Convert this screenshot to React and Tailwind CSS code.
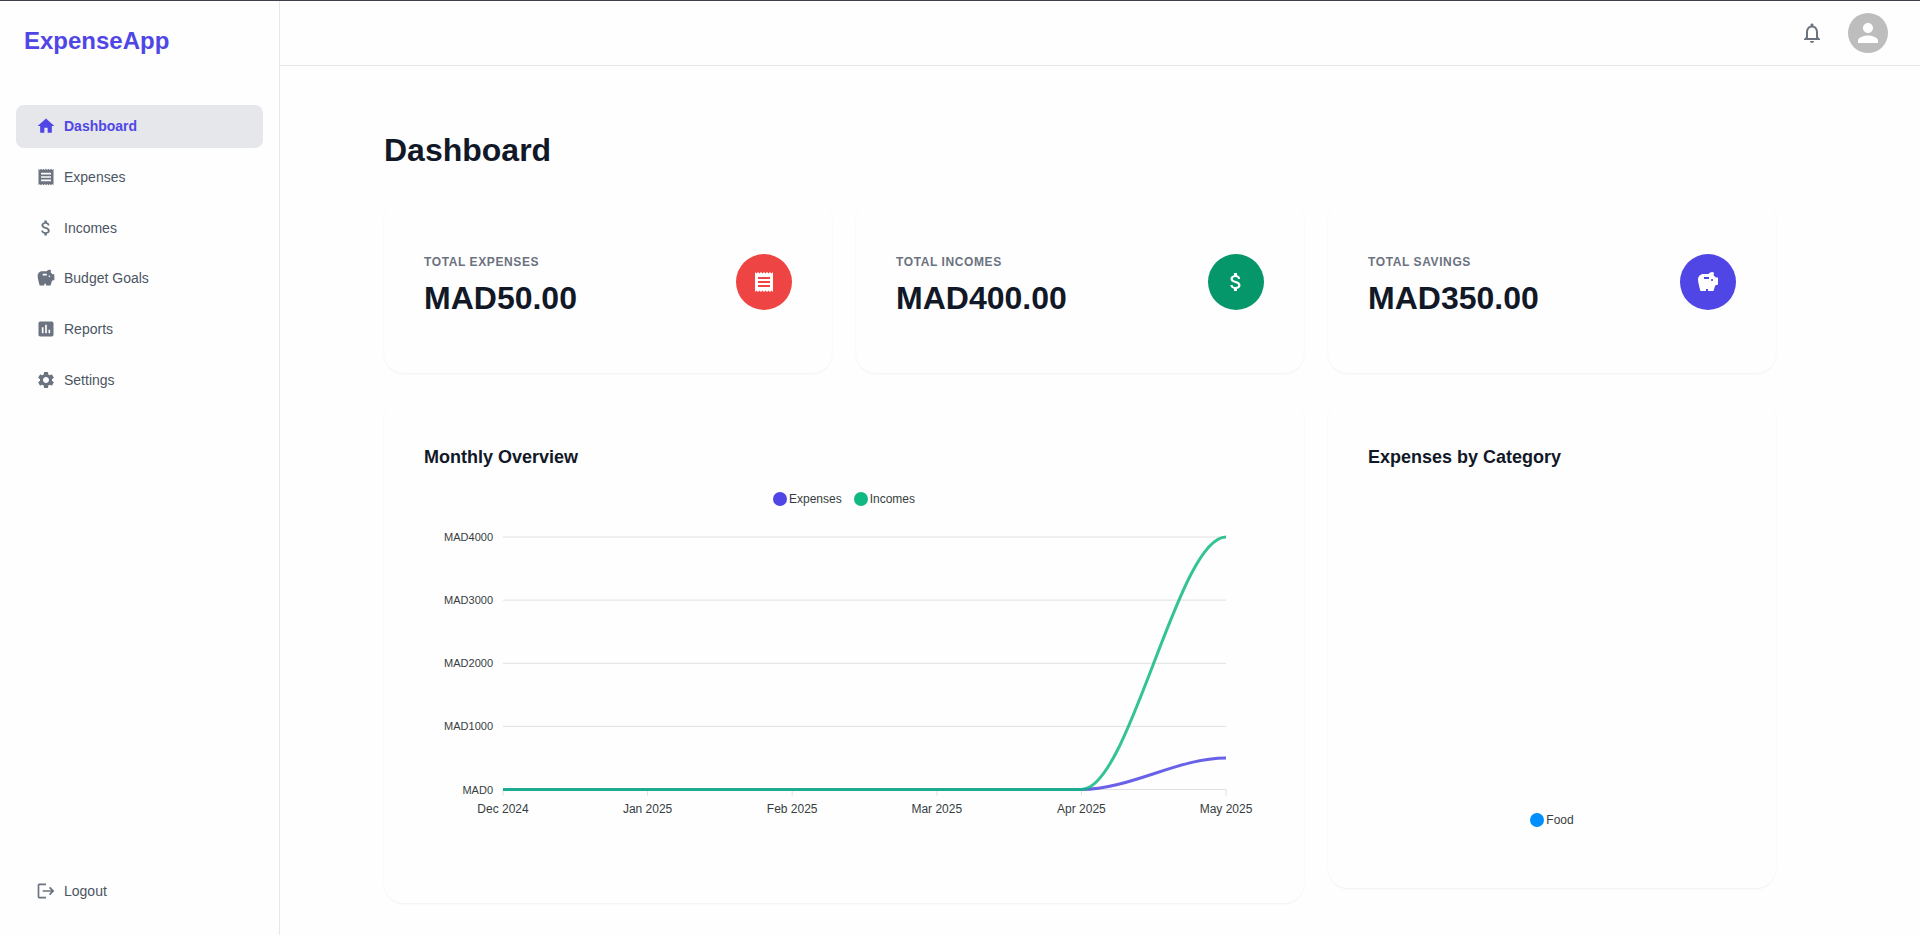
import {
  MdAssessment,
  MdAttachMoney,
  MdHome,
  MdLogout,
  MdNotificationsNone,
  MdPerson,
  MdReceipt,
  MdSavings,
  MdSettings,
} from "react-icons/md";

const navItems = [
  { label: "Dashboard", Icon: MdHome, active: true },
  { label: "Expenses", Icon: MdReceipt },
  { label: "Incomes", Icon: MdAttachMoney },
  { label: "Budget Goals", Icon: MdSavings },
  { label: "Reports", Icon: MdAssessment },
  { label: "Settings", Icon: MdSettings },
];

const stats = [
  { label: "TOTAL EXPENSES", value: "MAD50.00", Icon: MdReceipt, color: "bg-[#ef4444]" },
  { label: "TOTAL INCOMES", value: "MAD400.00", Icon: MdAttachMoney, color: "bg-[#059669]" },
  { label: "TOTAL SAVINGS", value: "MAD350.00", Icon: MdSavings, color: "bg-[#4f46e5]" },
];

const months = ["Dec 2024", "Jan 2025", "Feb 2025", "Mar 2025", "Apr 2025", "May 2025"];
const ticks = [4000, 3000, 2000, 1000, 0];

const PLOT = { left: 79, right: 802, top: 20, bottom: 272.5 };
const xAt = (i) => PLOT.left + ((PLOT.right - PLOT.left) * i) / (months.length - 1);
const yAt = (v) => PLOT.bottom - ((PLOT.bottom - PLOT.top) * v) / 4000;

// The series stay flat until April, then ease into the last value.
function linePath(last) {
  const x0 = xAt(4);
  const x1 = xAt(5);
  const third = (x1 - x0) / 3;
  return `M${xAt(0)} ${yAt(0)}H${x0}C${x0 + third} ${yAt(0)} ${x1 - third} ${yAt(last)} ${x1} ${yAt(last)}`;
}

function Sidebar() {
  return (
    <aside className="flex w-[280px] shrink-0 flex-col border-r border-[#e5e7eb]">
      <div className="px-6 pt-5 text-2xl leading-10 font-bold text-[#4f46e5]">ExpenseApp</div>
      <nav className="mt-11 grid h-[296px] grid-rows-6 gap-2 px-4">
        {navItems.map(({ label, Icon, active }) => (
          <a
            key={label}
            href="#"
            className={
              active
                ? "flex items-center gap-2 rounded-lg bg-[#e5e7eb] px-5 text-sm font-bold text-[#4f46e5]"
                : "flex items-center gap-2 rounded-lg px-5 text-sm text-[#4b5563]"
            }
          >
            <Icon className={active ? "size-5" : "size-5 text-[#6b7280]"} />
            {label}
          </a>
        ))}
      </nav>
      <div className="mt-auto px-4 pb-6">
        <button type="button" className="flex h-10 w-full items-center gap-2 rounded-lg px-5 text-sm text-[#4b5563]">
          <MdLogout className="size-5 text-[#6b7280]" />
          Logout
        </button>
      </div>
    </aside>
  );
}

function Header() {
  return (
    <header className="flex h-[65px] shrink-0 items-center justify-end gap-5 border-b border-[#e5e7eb] px-8">
      <button type="button" aria-label="Notifications" className="p-1 text-[#6b7280]">
        <MdNotificationsNone className="size-6" />
      </button>
      <button
        type="button"
        aria-label="Account"
        className="flex size-10 items-center justify-center rounded-full bg-[#bdbdbd] text-white"
      >
        <MdPerson className="size-[30px]" />
      </button>
    </header>
  );
}

function Card({ className = "", children }) {
  return (
    <section className={`rounded-[20px] bg-[#fefefe] p-10 shadow-[0_1px_2px_rgba(0,0,0,0.05)] ${className}`}>
      {children}
    </section>
  );
}

function LegendItem({ color, label }) {
  return (
    <li className="flex items-center gap-[2px]">
      <span className={`size-[14px] rounded-full ${color}`} />
      {label}
    </li>
  );
}

function OverviewChart() {
  return (
    <svg viewBox="0 0 840 306" className="block w-full font-['Liberation_Sans',Arial,sans-serif]" role="img" aria-label="Monthly overview">
      {ticks.map((t) => (
        <g key={t}>
          <line x1={PLOT.left} x2={PLOT.right} y1={yAt(t)} y2={yAt(t)} stroke="#e0e0e0" />
          <text x="69" y={yAt(t) + 4} textAnchor="end" fontSize="11" fill="#373d3f">
            {`MAD${t}`}
          </text>
        </g>
      ))}
      {months.map((m, i) => (
        <g key={m}>
          <line x1={xAt(i)} x2={xAt(i)} y1={PLOT.bottom} y2={PLOT.bottom + 6} stroke="#e0e0e0" />
          <text x={xAt(i)} y="296" textAnchor="middle" fontSize="12" fill="#373d3f">
            {m}
          </text>
        </g>
      ))}
      <path d={linePath(500)} fill="none" stroke="#4f46e5" strokeWidth="3" opacity="0.85" />
      <path d={linePath(4000)} fill="none" stroke="#10b981" strokeWidth="3" opacity="0.85" />
    </svg>
  );
}

export default function App() {
  return (
    <div className="flex h-screen overflow-hidden border-t border-[#3f3f4b] bg-[#fefefe] font-['Liberation_Sans',Arial,sans-serif] text-[#111827]">
      <Sidebar />
      <div className="flex min-w-0 flex-1 flex-col">
        <Header />
        <main className="min-h-0 flex-1 overflow-hidden pr-10">
          <div className="mx-auto flex max-w-[1392px] flex-col pt-16">
            <h1 className="text-[32px] leading-10 font-bold">Dashboard</h1>

            <div className="mt-7 grid grid-cols-3 gap-6">
              {stats.map(({ label, value, Icon, color }) => (
                <Card key={label} className="flex h-[175px] items-start justify-between">
                  <div className="pt-3">
                    <div className="text-xs leading-6 font-bold tracking-wider text-[#6b7280]">{label}</div>
                    <div className="mt-1 text-[32px] leading-10 font-bold">{value}</div>
                  </div>
                  <div className={`mt-4 flex size-14 items-center justify-center rounded-full text-white ${color}`}>
                    <Icon className="size-6" />
                  </div>
                </Card>
              ))}
            </div>

            <div className="mt-6 grid grid-cols-3 items-start gap-6">
              <Card className="col-span-2 h-[506px]">
                <h2 className="text-lg leading-10 font-bold">Monthly Overview</h2>
                <ul className="mt-3 flex h-5 items-center justify-center gap-3 text-xs text-[#373d3f]">
                  <LegendItem color="bg-[#4f46e5]" label="Expenses" />
                  <LegendItem color="bg-[#10b981]" label="Incomes" />
                </ul>
                <div className="mt-2">
                  <OverviewChart />
                </div>
              </Card>
              <Card className="flex h-[491px] flex-col justify-between">
                <h2 className="text-lg leading-10 font-bold">Expenses by Category</h2>
                <ul className="mb-5 flex h-4 items-center justify-center text-xs text-[#373d3f]">
                  <LegendItem color="bg-[#008ffb]" label="Food" />
                </ul>
              </Card>
            </div>

            <Card className="mt-6 min-h-40" />
          </div>
        </main>
      </div>
    </div>
  );
}
